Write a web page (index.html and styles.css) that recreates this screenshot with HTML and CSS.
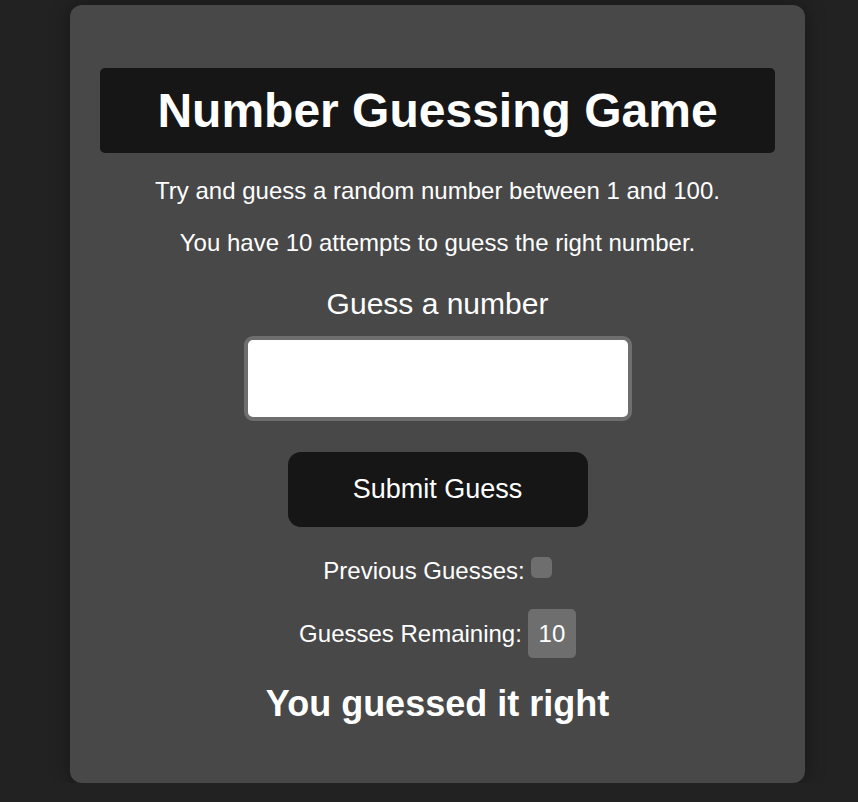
FILE: index.html
```html
<!DOCTYPE html>
<html>
<head>
<meta charset="utf-8">
<link rel="stylesheet" href="styles.css">
</head>
<body>
<div class="card">
  <h1 class="title">Number Guessing Game</h1>
  <p class="intro">Try and guess a random number between 1 and 100.</p>
  <p class="intro second">You have 10 attempts to guess the right number.</p>
  <label class="label" for="guess">Guess a number</label>
  <input class="field" id="guess" type="text">
  <button class="submit">Submit Guess</button>
  <div class="row prev">Previous Guesses: <span class="box empty"></span></div>
  <div class="row remain">Guesses Remaining: <span class="box count">10</span></div>
  <h2 class="result">You guessed it right</h2>
</div>
</body>
</html>
```
FILE: styles.css
```css
html, body {
  margin: 0;
  padding: 0;
  background: #222222;
  font-family: "Liberation Sans", Arial, sans-serif;
  color: #ffffff;
}
body {
  display: flex;
  padding: 5px 0 0 70px;
}
.card {
  width: 735px;
  height: 778px;
  box-sizing: border-box;
  background: #484848;
  border-radius: 12px;
  box-shadow: 0 0 20px rgba(0,0,0,0.35);
  padding: 63px 30px 0;
  display: flex;
  flex-direction: column;
  align-items: center;
}
.title {
  align-self: stretch;
  margin: 0;
  height: 85px;
  background: #161616;
  border-radius: 5px;
  font-size: 48px;
  font-weight: bold;
  display: flex;
  align-items: center;
  justify-content: center;
}
.intro {
  margin: 24px 0 0;
  font-size: 24px;
  line-height: 27px;
}
.second {
  margin-top: 25px;
}
.label {
  margin-top: 32px;
  font-size: 30px;
  line-height: 32px;
}
.field {
  margin-top: 16px;
  width: 388px;
  height: 85px;
  box-sizing: border-box;
  border: 4px solid #6e6e6e;
  border-radius: 9px;
  background: #ffffff;
  outline: none;
}
.submit {
  margin-top: 31px;
  width: 300px;
  height: 75px;
  border: none;
  border-radius: 13px;
  background: #161616;
  color: #ffffff;
  font-family: "Liberation Sans", Arial, sans-serif;
  font-size: 27px;
}
.row {
  display: flex;
  align-items: center;
  font-size: 24px;
  gap: 6px;
}
.prev {
  margin-top: 30px;
  height: 28px;
}
.box {
  background: #6e6e6e;
  border-radius: 5px;
}
.empty {
  width: 21px;
  height: 21px;
  align-self: flex-start;
}
.remain {
  margin-top: 24px;
}
.count {
  width: 48px;
  height: 49px;
  display: flex;
  align-items: center;
  justify-content: center;
  font-size: 24px;
}
.result {
  margin: 26px 0 0;
  font-size: 36px;
  line-height: 40px;
  font-weight: bold;
}
```
